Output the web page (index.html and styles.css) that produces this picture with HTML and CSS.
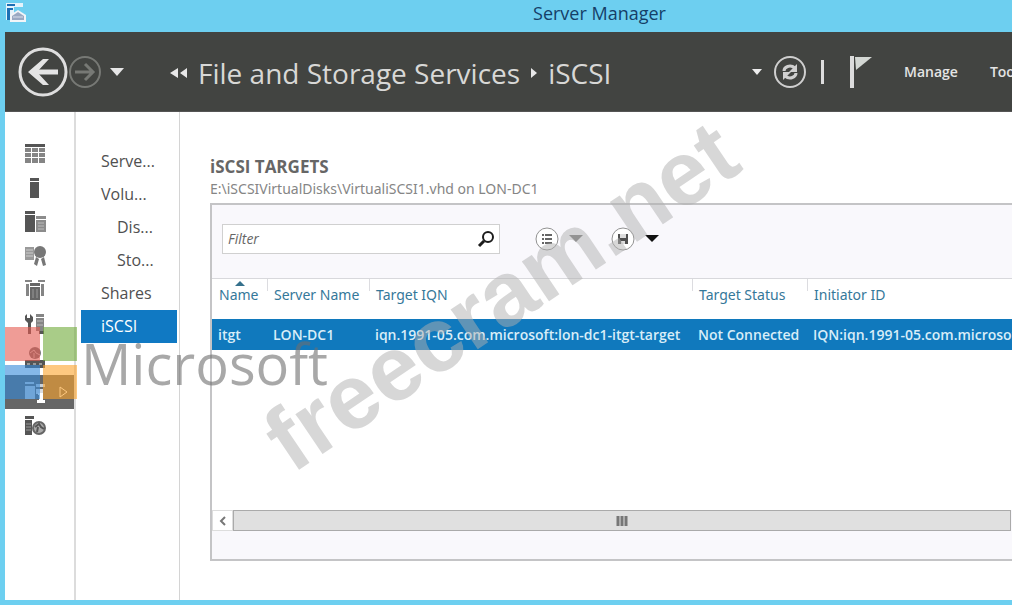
FILE: index.html
```
<!DOCTYPE html>
<html lang="en">
<head>
<meta charset="utf-8">
<title>Server Manager</title>
<link rel="stylesheet" href="styles.css">
</head>
<body>
<div class="window">
  <header class="titlebar">
    <svg class="app-icon" width="22" height="22" viewBox="0 0 22 22"><path d="M1 1h17v4H9v13H1z" fill="#e4f3fb"/><path d="M2 2h8v2H2zM2 6h6v2H5v10H2z" fill="#1d6fb5"/><path d="M5 20v-7l8-5 8 5v7z" fill="#f2f5f8"/><path d="M7 18v-4l6-4 6 4v4z" fill="#9aa9c2"/><path d="M8 15h10" stroke="#d7deea"/></svg>
    <h1 class="window-title">Server Manager</h1>
  </header>

  <div class="toolbar">
    <div class="history">
      <button class="plain" aria-label="Back"><svg width="50" height="50" viewBox="0 0 50 50" fill="none"><circle cx="25" cy="25" r="23" stroke="#dedede" stroke-width="3"/><path d="M40 25H14" stroke="#e4e4e4" stroke-width="5"/><path d="M25 12h6L19 25l12 13h-6L10 25z" fill="#e4e4e4"/></svg></button>
      <button class="plain" aria-label="Forward"><svg width="34" height="34" viewBox="0 0 34 34" fill="none"><circle cx="17" cy="17" r="15" stroke="#777975" stroke-width="2"/><path d="M7 17h17M17 9l8 8-8 8" stroke="#777975" stroke-width="3"/></svg></button>
      <button class="plain" aria-label="History"><svg width="14" height="10" viewBox="0 0 14 10"><path d="M0 1h14L7 9z" fill="#e6e6e6"/></svg></button>
    </div>
    <nav class="crumbs" aria-label="Breadcrumb">
      <svg width="18" height="12" viewBox="0 0 18 12"><path d="M8 1v10L0 6zM17 1v10L10 6z" fill="#e8e8e8"/></svg>
      <a href="#">File and Storage Services</a>
      <svg width="8" height="12" viewBox="0 0 8 12"><path d="M1 1v10l6-5z" fill="#e8e8e8"/></svg>
      <a href="#">iSCSI</a>
    </nav>
    <div class="tools">
      <button class="plain" aria-label="More locations"><svg width="10" height="6" viewBox="0 0 10 6"><path d="M0 0h10L5 6z" fill="#eee"/></svg></button>
      <button class="plain refresh" aria-label="Refresh"><svg width="34" height="34" viewBox="0 0 34 34" fill="none" stroke="#cfcfcf"><circle cx="17" cy="17" r="15" stroke-width="2"/><path d="M11 16c0-4 6-7 11-3M23 18c0 4-6 7-11 3" stroke-width="3"/><path d="M24 9v8h-8zM10 25v-8h8z" fill="#cfcfcf" stroke="none"/></svg></button>
      <span class="divider"></span>
      <button class="plain flag" aria-label="Notifications"><svg width="22" height="32" viewBox="0 0 22 32"><path d="M0 0h4v32H0z" fill="#dcdcdc"/><path d="M5 1h17L6 14z" fill="#d4d8d4"/></svg></button>
      <button class="plain menu">Manage</button>
      <button class="plain menu">Tools</button>
    </div>
  </div>

  <div class="body">
    <nav class="rail" aria-label="Servers">
      <a href="#" aria-label="Dashboard"><svg width="22" height="22" viewBox="0 0 22 22"><path d="M1 1h20v3H1z" fill="#555"/><path d="M1 5h6v4H1zM8 5h6v4H8zM15 5h6v4h-6zM1 10h6v4H1zM8 10h6v4H8zM15 10h6v4h-6zM1 15h6v5H1zM8 15h6v5H8zM15 15h6v5h-6z" fill="#858585"/></svg></a>
      <a href="#" aria-label="Local server"><svg width="22" height="22" viewBox="0 0 22 22"><path d="M6 1h9v3H6zM6 5h9v16H6z" fill="#555"/></svg></a>
      <a href="#" aria-label="All servers"><svg width="22" height="22" viewBox="0 0 22 22"><path d="M1 0h10v3H1zM1 4h10v17H1z" fill="#555"/><path d="M12 5h10v3H12zM12 9h10v12H12z" fill="#8c8c8c"/><path d="M14 12h6M14 15h6M14 18h6" stroke="#bbb"/></svg></a>
      <a href="#" aria-label="Certificates"><svg width="22" height="22" viewBox="0 0 22 22"><path d="M1 2h9v13H1z" fill="#9a9a9a"/><path d="M2 5h7M2 8h7M2 11h7" stroke="#ccc"/><circle cx="16" cy="7" r="6" fill="#777"/><path d="M12 12l3 2-2 7-3-2zM17 14l3-2 2 8-3 1z" fill="#777"/></svg></a>
      <a href="#" aria-label="Server group"><svg width="22" height="22" viewBox="0 0 22 22"><path d="M1 1h7v2H1zM14 1h7v2h-7zM2 5h3v12H2zM17 5h3v12h-3z" fill="#858585"/><path d="M6 4h10v3H6zM6 8h10v13H6z" fill="#666"/><path d="M9 10v9M13 10v9" stroke="#999"/></svg></a>
      <a href="#" aria-label="Configuration"><svg width="22" height="22" viewBox="0 0 22 22"><path d="M3 1v4h3V1l3 3v4L7 10v11H4V10L1 7V3z" fill="#555"/><path d="M12 1h8v3h-8zM12 5h8v13h-8z" fill="#858585"/><path d="M15 18h5v3h-5z" fill="#555"/><path d="M13 8h6M13 12h6" stroke="#bbb"/></svg></a>
      <a href="#" aria-label="Remote access"><svg width="22" height="22" viewBox="0 0 22 22"><circle cx="11" cy="6" r="6" fill="#777"/><path d="M6 6l4-3 2 3 4 2M10 6v5" stroke="#ccc" fill="none"/><path d="M1 13h20v8H1z" fill="#555"/><path d="M3 17h3M9 17h3M15 17h3" stroke="#999" stroke-width="2"/></svg></a>
      <a href="#" class="current" aria-label="File and Storage Services"><svg width="22" height="22" viewBox="0 0 22 22"><path d="M1 1h9v2H1zM1 5h10v13H1zM12 3h9v3h-9z" fill="#c9d0d8"/><path d="M12 8h7v5h-7z" fill="#d9dce0"/><path d="M14 12h5v7h2v3h-8v-3h2v-5h-1z" fill="#fff"/></svg><svg class="arrow" width="9" height="14" viewBox="0 0 9 14"><path d="M1 2l7 5-7 5z" fill="none" stroke="#fff"/></svg></a>
      <a href="#" aria-label="Web server"><svg width="22" height="22" viewBox="0 0 22 22"><path d="M1 1h9v3H1zM1 5h7v15H1z" fill="#555"/><path d="M2 9h5M2 12h5M2 15h5" stroke="#999"/><circle cx="15" cy="13" r="6" fill="#aaa" stroke="#666" stroke-width="2"/><path d="M11 12l4-3 2 3 3 2M14 12l-1 5" stroke="#555" stroke-width="2" fill="none"/></svg></a>
    </nav>

    <nav class="pages" aria-label="Pages">
      <a href="#">Serve...</a>
      <a href="#">Volu...</a>
      <a href="#" class="sub">Dis...</a>
      <a href="#" class="sub">Sto...</a>
      <a href="#">Shares</a>
      <a href="#" class="active">iSCSI</a>
    </nav>

    <main class="content">
      <h2 class="heading">iSCSI TARGETS</h2>
      <p class="path">E:\iSCSIVirtualDisks\VirtualiSCSI1.vhd on LON-DC1</p>
      <section class="panel">
        <div class="filterbar">
          <div class="search">
            <input type="text" placeholder="Filter" aria-label="Filter">
            <button class="plain" aria-label="Search"><svg width="18" height="18" viewBox="0 0 18 18" fill="none" stroke="#1c1c1c"><circle cx="11" cy="7" r="5" stroke-width="2"/><path d="M7 11l-5 5" stroke-width="3"/></svg></button>
          </div>
          <button class="plain option" aria-label="Criteria"><svg width="24" height="24" viewBox="0 0 24 24" fill="none"><circle cx="12" cy="12" r="11" fill="#fff" stroke="#929292"/><path d="M7 8h2M7 12h2M7 16h2M10 8h7M10 12h7M10 16h7" stroke="#666" stroke-width="2"/></svg><svg width="14" height="8" viewBox="0 0 14 8"><path d="M0 0h14L7 7z" fill="#777"/></svg></button>
          <button class="plain option" aria-label="Saved queries"><svg width="24" height="24" viewBox="0 0 24 24" fill="none"><circle cx="12" cy="12" r="11" fill="#fff" stroke="#929292"/><path d="M7 7h10v10H7z" fill="#505050"/><path d="M9 7h6v4H9zM10 14h4v3h-4z" fill="#ddd"/></svg><svg width="14" height="8" viewBox="0 0 14 8"><path d="M0 0h14L7 7z" fill="#111"/></svg></button>
        </div>
        <div class="grid">
          <table>
            <colgroup><col class="c-name"><col class="c-server"><col class="c-iqn"><col class="c-status"><col class="c-init"></colgroup>
            <thead><tr><th class="sorted">Name</th><th>Server Name</th><th>Target IQN</th><th>Target Status</th><th>Initiator ID</th></tr></thead>
            <tbody><tr><td>itgt</td><td>LON-DC1</td><td>iqn.1991-05.com.microsoft:lon-dc1-itgt-target</td><td>Not Connected</td><td>IQN:iqn.1991-05.com.microsoft</td></tr></tbody>
          </table>
        </div>
        <div class="scroll">
          <button class="plain scroll-left" aria-label="Scroll left"><svg width="8" height="10" viewBox="0 0 8 10"><path d="M6 1L2 5l4 4" fill="none" stroke="#777" stroke-width="2"/></svg></button>
          <div class="thumb"><svg width="12" height="10" viewBox="0 0 12 10"><path d="M2 0v10M6 0v10M10 0v10" stroke="#777" stroke-width="3"/></svg></div>
        </div>
      </section>
    </main>
  </div>

  <div class="brand">
    <svg width="72" height="72" viewBox="0 0 72 72" fill-opacity=".6"><path d="M0 0h35v34H0z" fill="#e45a50"/><path d="M38 0h34v34H38z" fill="#70aa39"/><path d="M0 38h35v34H0z" fill="#3489d9"/><path d="M38 38h34v34H38z" fill="#fca32b"/></svg>
    <span>Microsoft</span>
  </div>
  <div class="watermark">freecram.net</div>
</div>
</body>
</html>
```
FILE: styles.css
```
* { box-sizing: border-box; }
body { margin: 0; font-family: "Open Sans", "Noto Sans", sans-serif; }
a { color: inherit; text-decoration: none; }
h1, h2, p { margin: 0; font-weight: 400; }
svg { display: block; flex: none; }

.plain { display: flex; align-items: center; justify-content: center; flex: none; margin: 0; padding: 0; border: 0; background: none; color: inherit; font: inherit; }

.window { position: relative; display: flex; flex-direction: column; min-height: 100vh; overflow: hidden; padding: 0 0 5px 5px; background: #6dcff0; }

.titlebar { display: flex; align-items: center; height: 32px; padding-bottom: 6px; }
.window-title { flex: 1; padding-right: 145px; margin-left: 305px; text-align: center; font-size: 18px; line-height: 24px; color: #153f68; }

.toolbar { display: flex; align-items: center; height: 80px; padding-left: 13px; background: #424441; border-bottom: 1px solid #555; color: #e4e4e4; }
.history { display: flex; align-items: center; width: 152px; }
.history .plain:last-child { margin-left: 8px; }
.crumbs { display: flex; flex: 1; align-items: center; gap: 10px; padding-top: 3px; color: #d8d8d6; font-size: 28px; white-space: nowrap; }
.tools { display: flex; align-items: center; width: 260px; overflow: hidden; }
.refresh { margin-left: 11px; }
.divider { flex: none; width: 3px; height: 24px; margin-left: 14px; background: #ddd; }
.flag { margin-left: 26px; }
.menu { margin-left: 32px; font-size: 14px; font-weight: 600; }

.body { display: flex; flex: 1; background: #fff; }

.rail { display: flex; flex-direction: column; width: 71px; padding-top: 25px; border-right: 2px solid #dcdcdc; }
.rail a { display: flex; align-items: center; height: 34px; padding-left: 19px; }
.rail .current { background: #666; }
.arrow { margin-left: 13px; }

.pages { display: flex; flex-direction: column; width: 104px; padding: 33px 2px 0 5px; border-right: 1px solid #d4d4d4; color: #505050; font-size: 16px; line-height: 33px; }
.pages a { padding-left: 20px; }
.pages .sub { padding-left: 36px; }
.pages .active { background: #1079c3; color: #fff; }

.content { display: flex; flex: 1; flex-direction: column; min-width: 0; padding: 43px 0 39px 30px; }
.heading { color: #666; font-size: 17px; font-weight: 700; line-height: 24px; }
.path { color: #858585; font-family: "Noto Sans", sans-serif; font-size: 14px; line-height: 20px; white-space: nowrap; }
.panel { display: flex; flex: 1; flex-direction: column; margin-top: 4px; border: 2px solid #c4c4c6; border-right: 0; background: #f9f8fc; }

.filterbar { display: flex; align-items: center; height: 73px; padding: 0 0 6px 10px; }
.search { display: flex; width: 278px; height: 30px; margin-right: 35px; padding-right: 4px; border: 1px solid #d0d0d0; background: #fff; }
.search input { flex: 1; min-width: 0; padding: 0 5px; border: 0; outline: 0; background: none; font: italic 14px "Open Sans", sans-serif; }
.search input::placeholder { color: #666; opacity: 1; }
.option { gap: 10px; margin-right: 28px; }

.grid { flex: 1; overflow: hidden; border-top: 1px solid #d8d8dc; background: #fff; }
table { width: 100%; table-layout: fixed; border-collapse: collapse; font-size: 14px; white-space: nowrap; }
.c-name { width: 55px; }
.c-server { width: 102px; }
.c-iqn { width: 323px; }
.c-status { width: 115px; }
th { position: relative; height: 40px; padding: 0 0 9px 7px; text-align: left; font-family: "Noto Sans", sans-serif; font-weight: 400; color: #35789a; }
th + th::before { content: ""; position: absolute; top: 0; left: 0; width: 1px; height: 12px; background: #dcdce0; }
.sorted::after { content: ""; position: absolute; top: 2px; left: 23px; border: 5px solid transparent; border-top: 0; border-bottom-color: #35708c; }
td { height: 31px; padding: 0 0 0 6px; background: #1079bd; color: #d8edf8; font-weight: 600; }

.scroll { display: flex; height: 21px; margin-bottom: 28px; }
.scroll-left { width: 21px; background: #fff; border: 1px solid #ddd; }
.thumb { display: flex; flex: 1; align-items: center; justify-content: center; margin-right: 1px; border: 1px solid #aaa; background: #e0e0e0; }

.brand { position: absolute; top: 327px; left: 5px; display: flex; align-items: center; gap: 4px; color: rgba(110, 110, 110, .6); font-size: 56px; line-height: 72px; }
.watermark { position: absolute; top: 246px; left: 228px; color: rgba(176, 176, 176, .5); font: bold 91px/100px "Liberation Sans", sans-serif; transform: rotate(-34deg); }
```
